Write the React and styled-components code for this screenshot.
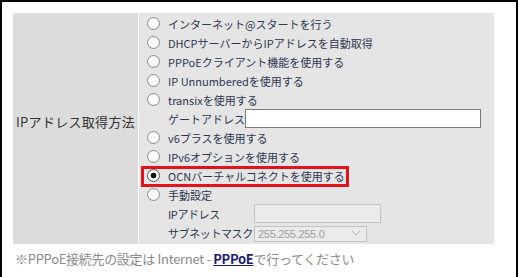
import styled, { createGlobalStyle } from 'styled-components';

const GlobalStyle = createGlobalStyle`
  body {
    margin: 0;
    background: #fff;
    font-family: "Noto Sans CJK JP", "Liberation Sans", sans-serif;
  }
`;

const modes = [
  { id: 'start', label: 'インターネット@スタートを行う' },
  { id: 'dhcp', label: 'DHCPサーバーからIPアドレスを自動取得' },
  { id: 'pppoe', label: 'PPPoEクライアント機能を使用する' },
  { id: 'unnum', label: 'IP Unnumberedを使用する' },
  { id: 'transix', label: 'transixを使用する', gateway: true },
  { id: 'v6plus', label: 'v6プラスを使用する' },
  { id: 'ipv6opt', label: 'IPv6オプションを使用する' },
  { id: 'ocn', label: 'OCNバーチャルコネクトを使用する', checked: true },
  { id: 'manual', label: '手動設定', manual: true },
];

export default function App() {
  return (
    <>
      <GlobalStyle />
      <Frame>
        <Settings>
          <LabelCell>IPアドレス取得方法</LabelCell>
          <ValueCell>
            {modes.map((mode) => (
              <div key={mode.id}>
                <Row $highlighted={mode.checked}>
                  <Radio name="ipmode" defaultChecked={mode.checked} />
                  <span>{mode.label}</span>
                </Row>
                {mode.gateway && (
                  <SubRow>
                    <span>ゲートアドレス</span>
                    <TextInput />
                  </SubRow>
                )}
                {mode.manual && (
                  <ManualGrid>
                    <span>IPアドレス</span>
                    <DisabledInput disabled />
                    <span>サブネットマスク</span>
                    <SelectWrap>
                      <Select disabled defaultValue="255.255.255.0">
                        <option>255.255.255.0</option>
                      </Select>
                      <Chevron width="10" height="6" viewBox="0 0 10 6">
                        <path d="M1 1l4 4 4-4" fill="none" stroke="#b5b5b5" strokeWidth="1" />
                      </Chevron>
                    </SelectWrap>
                  </ManualGrid>
                )}
              </div>
            ))}
          </ValueCell>
        </Settings>
        <Note>
          ※PPPoE接続先の設定は Internet - <NoteLink href="#">PPPoE</NoteLink>で行ってください
        </Note>
      </Frame>
    </>
  );
}

const Frame = styled.div`
  box-sizing: border-box;
  width: 518px;
  height: 277px;
  border: 2px solid #000;
  border-bottom: none;
  padding: 11px 0 0 11px;
`;

const Settings = styled.div`
  display: grid;
  grid-template-columns: 125px 355px;
  column-gap: 1px;
  width: fit-content;
`;

const LabelCell = styled.div`
  background: #dcdcdc;
  display: flex;
  align-items: center;
  justify-content: center;
  padding-bottom: 14px;
  font-size: 13px;
  letter-spacing: 0.3px;
  color: #333;
  white-space: nowrap;
`;

const ValueCell = styled.div`
  background: #e5e5e5;
  padding: 1px 0 2px 8px;
`;

const Row = styled.label`
  position: relative;
  display: flex;
  align-items: center;
  gap: 8px;
  width: fit-content;
  height: 19px;
  font-size: 11px;
  color: #2e3650;
  white-space: nowrap;

  ${({ $highlighted }) =>
    $highlighted &&
    `
    &::after {
      content: '';
      position: absolute;
      box-sizing: border-box;
      left: -6px;
      right: -4px;
      top: 0;
      bottom: -2px;
      border: 3px solid #e5121b;
    }
  `}
`;

const Radio = styled.input.attrs({ type: 'radio' })`
  appearance: none;
  flex: none;
  margin: 0;
  width: 13px;
  height: 13px;
  border-radius: 50%;
  border: 1px solid #8e8e8e;
  background: radial-gradient(circle at 50% 45%, #fff 45%, #e4e4e4 100%);

  &:checked {
    border-color: #555;
    background: radial-gradient(circle, #111 0 2.6px, #fff 3.2px, #f2f2f2 100%);
  }
`;

const SubRow = styled.div`
  display: flex;
  align-items: center;
  height: 19px;
  padding-left: 21px;
  font-size: 11px;
  color: #2e3650;
  white-space: nowrap;
`;

const TextInput = styled.input`
  box-sizing: border-box;
  flex: none;
  width: 236px;
  height: 19px;
  margin: 0;
  border: 1px solid #7a7a7a;
  background: #fff;
`;

const ManualGrid = styled.div`
  display: grid;
  grid-template-columns: 86px auto;
  grid-auto-rows: 19px;
  align-items: center;
  padding-left: 21px;
  font-size: 11px;
  letter-spacing: -0.4px;
  color: #2e3650;
  white-space: nowrap;
`;

const DisabledInput = styled.input`
  box-sizing: border-box;
  width: 127px;
  height: 19px;
  margin: 0;
  border: 1px solid #c3c3c3;
  background: #ebebeb;
`;

const SelectWrap = styled.div`
  position: relative;
  width: 113px;
  height: 16px;
`;

const Select = styled.select`
  appearance: none;
  box-sizing: border-box;
  width: 100%;
  height: 100%;
  margin: 0;
  padding: 0 0 0 3px;
  border: 1px solid #c3c3c3;
  border-radius: 0;
  background: #ebebeb;
  font-family: "Liberation Sans", sans-serif;
  font-size: 11px;
  letter-spacing: -0.3px;
  color: #a0a0a0;
  opacity: 1;
`;

const Chevron = styled.svg`
  position: absolute;
  right: 6px;
  top: 5px;
`;

const Note = styled.p`
  margin: 6px 0 0 2px;
  font-size: 13px;
  line-height: 18px;
  letter-spacing: -0.3px;
  color: #8a8a8a;
  white-space: nowrap;
`;

const NoteLink = styled.a`
  color: #1b1b78;
  font-weight: bold;
  text-decoration: underline;
`;
